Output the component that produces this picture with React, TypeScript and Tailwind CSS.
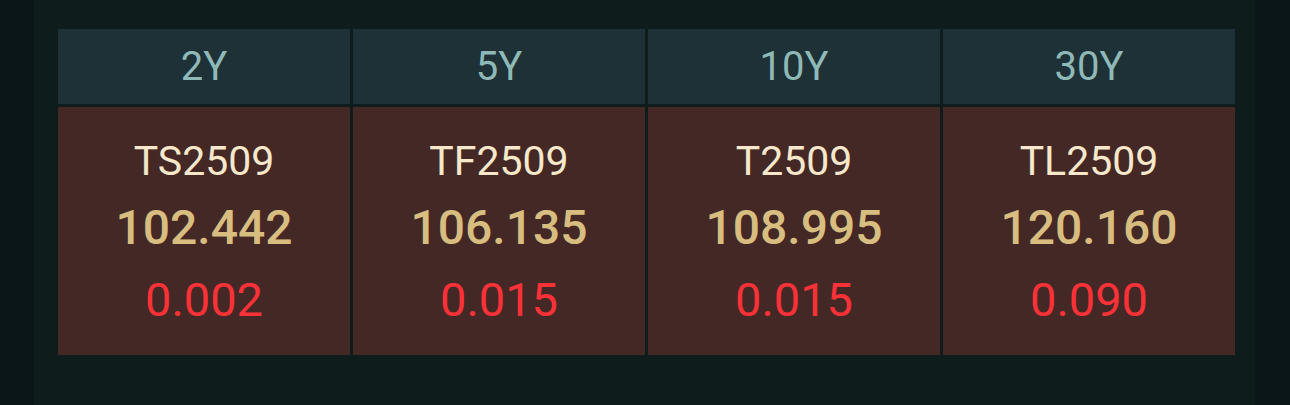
const contracts = [
  { tenor: "2Y", code: "TS2509", price: "102.442", change: "0.002" },
  { tenor: "5Y", code: "TF2509", price: "106.135", change: "0.015" },
  { tenor: "10Y", code: "T2509", price: "108.995", change: "0.015" },
  { tenor: "30Y", code: "TL2509", price: "120.160", change: "0.090" },
];

export default function App() {
  return (
    <div
      className="h-[405px] w-[1290px] overflow-hidden bg-[#0a1617]"
      style={{ fontFamily: "Roboto, 'Noto Sans', sans-serif" }}
    >
      <div className="ml-[34px] h-full w-[1221px] bg-[#0e1c1c] pl-[24px] pt-[29px]">
        <div className="grid w-[1177px] grid-cols-4 gap-[3px]">
          {contracts.map((c) => (
            <div
              key={c.tenor}
              className="flex h-[75px] items-center justify-center bg-[#1e3137] text-[40px] leading-none text-[#8fb9b6]"
            >
              {c.tenor}
            </div>
          ))}
          {contracts.map((c) => (
            <div key={c.code} className="flex h-[248px] flex-col items-center bg-[#442825] pt-[24px]">
              <p className="text-[41px] leading-[61px] text-[#f7e8cc]">{c.code}</p>
              <p className="text-[48px] font-medium leading-[71px] text-[#d8bd80]">{c.price}</p>
              <p className="text-[47px] leading-[74px] text-[#fa3238]">{c.change}</p>
            </div>
          ))}
        </div>
      </div>
    </div>
  );
}
